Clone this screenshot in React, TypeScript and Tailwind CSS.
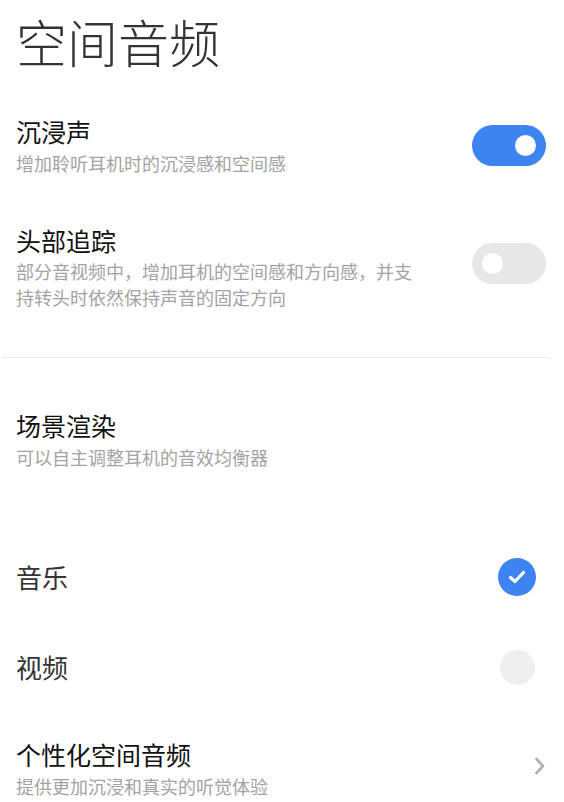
import React, { useState } from "react";

const Toggle: React.FC<{ on: boolean; onChange: () => void; className?: string }> = ({
  on,
  onChange,
  className = "",
}) => (
  <button
    onClick={onChange}
    className={`relative w-[74px] h-[41px] rounded-full shrink-0 ${
      on ? "bg-[#3d84f0]" : "bg-[#e7e7e7]"
    } ${className}`}
  >
    <span
      className={`absolute top-[10px] w-[21px] h-[21px] rounded-full bg-white ${
        on ? "right-[10px]" : "left-[10px]"
      }`}
    />
  </button>
);

const Radio: React.FC<{ checked: boolean }> = ({ checked }) => (
  <div className="w-[38px] h-[38px] flex items-center justify-center shrink-0">
    {checked ? (
      <div className="w-[38px] h-[38px] rounded-full bg-[#3d84f0] flex items-center justify-center">
        <svg width="18" height="14" viewBox="0 0 18 14" fill="none">
          <path
            d="M2.5 7.5 L7 11.5 L15.5 2.5"
            stroke="white"
            strokeWidth="3.2"
            strokeLinecap="round"
            strokeLinejoin="round"
          />
        </svg>
      </div>
    ) : (
      <div className="w-[35px] h-[35px] rounded-full bg-[#efefef]" />
    )}
  </div>
);

export default function App() {
  const [immersive, setImmersive] = useState(true);
  const [headTracking, setHeadTracking] = useState(false);
  const [scene, setScene] = useState<"music" | "video">("music");

  return (
    <div
      className="w-[564px] h-[802px] overflow-hidden bg-white flex flex-col"
      style={{ fontFamily: '"Noto Sans CJK SC", "Noto Sans", sans-serif' }}
    >
      <div className="h-[82px] shrink-0 flex items-center pl-[16px]">
        <h1 className="text-[51px] leading-[60px] font-light text-[#333]">空间音频</h1>
      </div>

      {/* 沉浸声 */}
      <div className="h-[126px] shrink-0 flex items-center justify-between pl-4 pr-[18px]">
        <div className="flex flex-col gap-[3px]">
          <div className="text-[25px] leading-[32px] text-[#111]">沉浸声</div>
          <div className="text-[18px] leading-[26px] text-[#a3a3a3]">增加聆听耳机时的沉浸感和空间感</div>
        </div>
        <Toggle on={immersive} onChange={() => setImmersive(!immersive)} />
      </div>

      {/* 头部追踪 */}
      <div className="h-[118px] shrink-0 flex items-center justify-between pl-4 pr-[18px]">
        <div className="flex flex-col gap-[2px] w-[412px]">
          <div className="text-[25px] leading-[32px] text-[#111]">头部追踪</div>
          <div className="text-[18px] leading-[26px] text-[#a3a3a3]">
            部分音视频中，增加耳机的空间感和方向感，并支持转头时依然保持声音的固定方向
          </div>
        </div>
        <Toggle
          on={headTracking}
          onChange={() => setHeadTracking(!headTracking)}
          className="mb-[7px]"
        />
      </div>

      <div className="mt-[31px] ml-[2px] w-[547px] h-px bg-[#ececec] shrink-0" />

      {/* 场景渲染 */}
      <div className="h-[162px] shrink-0 flex items-center pl-4">
        <div className="flex flex-col gap-[3px]">
          <div className="text-[25px] leading-[32px] text-[#111]">场景渲染</div>
          <div className="text-[18px] leading-[26px] text-[#a3a3a3]">可以自主调整耳机的音效均衡器</div>
        </div>
      </div>

      <div
        className="h-[114px] shrink-0 flex items-center justify-between pl-4 pr-[28px]"
        onClick={() => setScene("music")}
      >
        <div className="text-[26px] leading-[34px] text-[#333]">音乐</div>
        <Radio checked={scene === "music"} />
      </div>

      <div
        className="h-[66px] shrink-0 flex items-center justify-between pl-4 pr-[28px]"
        onClick={() => setScene("video")}
      >
        <div className="text-[26px] leading-[34px] text-[#333]">视频</div>
        <Radio checked={scene === "video"} />
      </div>

      {/* 个性化空间音频 */}
      <div className="h-[136px] shrink-0 flex items-center justify-between pl-4 pr-[18px]">
        <div className="flex flex-col gap-[3px]">
          <div className="text-[25px] leading-[32px] text-[#111]">个性化空间音频</div>
          <div className="text-[18px] leading-[26px] text-[#a3a3a3]">提供更加沉浸和真实的听觉体验</div>
        </div>
        <svg width="12" height="18" viewBox="0 0 12 18" fill="none" className="mt-[-5px]">
          <path
            d="M2.5 2 L9 9 L2.5 16"
            stroke="#b0b0b0"
            strokeWidth="2.6"
            strokeLinecap="round"
            strokeLinejoin="round"
          />
        </svg>
      </div>
    </div>
  );
}
